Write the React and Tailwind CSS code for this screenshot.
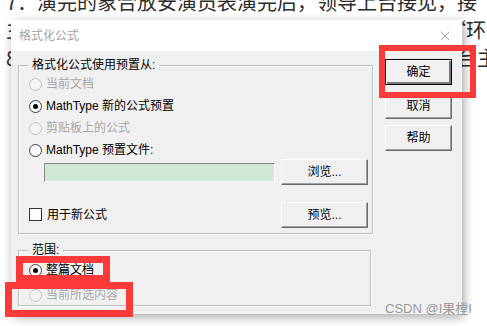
import { X } from "lucide-react";

const ui = { fontFamily: '"Liberation Sans", "Noto Sans CJK SC", sans-serif' };
const cjk = { fontFamily: '"Noto Sans CJK SC", sans-serif' };

export default function App() {
  return (
    <div className="relative h-[326px] w-[487px] overflow-hidden bg-white">
      {/* article text behind the dialog */}
      <div className="mt-[-12px] whitespace-nowrap pl-[6px] text-[20px] leading-[28px] text-[#2b2b2b]" style={cjk}>
        <p>7：演完的象合放安演员表演完后，领导上台接见，接</p>
        <p>主任宣读：给一位演员颁发奖状，这个奖状叫做道“环</p>
        <p>8、演出结束后，演员们集体合影留念，然后谢幕下台主</p>
        <p>《一起去参加庆功宴会，大家一起吃饭喝酒祝贺三</p>
      </div>

      <div className="absolute left-[11px] top-[20px] flex h-[294px] w-[451px] flex-col shadow-[2px_3px_10px_rgba(0,0,0,0.35)]" style={ui}>
        <div className="flex h-[31px] items-center justify-between bg-white pl-[8px] pr-[9px] text-[12px] text-[#a3a3a3]">
          <span>格式化公式</span>
          <X size={16} strokeWidth={1} className="text-[#777]" />
        </div>

        <div className="flex flex-1 bg-[#f0f0f0] pl-[7px] text-[12px] text-black">
          <div className="flex w-[355px] flex-col pt-[14px]">
            <Group label="格式化公式使用预置从:" className="h-[169px] w-[355px] pt-[7px]">
              <Radio label="当前文档" disabled />
              <Radio label="MathType 新的公式预置" checked />
              <Radio label="剪贴板上的公式" disabled />
              <Radio label="MathType 预置文件:" />
              <div className="mt-[-2px] flex h-[26px] items-center justify-between pl-[25px] pr-[4px]">
                <div className="h-[19px] w-[231px] border border-b-white border-l-[#8a8a8a] border-r-white border-t-[#8a8a8a] bg-[#cfe8d3]" />
                <Btn className="w-[87px]">浏览...</Btn>
              </div>
              <div className="mt-[17px] flex h-[25px] items-center pl-[10px] pr-[4px]">
                <span className="h-[13px] w-[13px] border border-[#333] bg-white" />
                <span className="ml-[5px]">用于新公式</span>
                <Btn className="ml-auto w-[87px]">预览...</Btn>
              </div>
            </Group>

            <Group label="范围:" className="mt-[16px] h-[56px] w-[353px] pt-[8px]">
              <Radio label="整篇文档" checked />
              <div className="mt-[3px]">
                <Radio label="当前所选内容" disabled />
              </div>
            </Group>
          </div>

          <div className="ml-[12px] flex flex-col pt-[8px]">
            <Btn def className="w-[67px]">确定</Btn>
            <Btn className="mt-[8px] w-[67px]">取消</Btn>
            <Btn className="mt-[6px] w-[67px]">帮助</Btn>
          </div>
        </div>
      </div>

      {/* red annotation boxes */}
      <div className="absolute left-[5px] top-[282px] h-[35px] w-[128px] border-[7px] border-[#fc3a3a]" />
      <div className="absolute left-[16px] top-[256px] h-[26px] w-[94px] border-[7px] border-[#fc3a3a]" />
      <div className="absolute left-[379px] top-[45px] h-[53px] w-[97px] border-[6px] border-[#fc3a3a]" />

      <div className="absolute left-[385px] top-[301px] text-[13px] leading-[16px] text-[#8f8f8f]/90" style={ui}>
        CSDN @I果樘I
      </div>
    </div>
  );
}

function Group({ label, className, children }) {
  return (
    <div className={`relative border border-[#bdbdbd] shadow-[1px_1px_0_#fff,inset_1px_1px_0_#fff] ${className}`}>
      <span className="absolute left-[9px] top-[-9px] bg-[#f0f0f0] px-[4px] leading-[16px]">{label}</span>
      {children}
    </div>
  );
}

function Radio({ label, checked, disabled }) {
  return (
    <div className="flex h-[22px] items-center pl-[10px]">
      <span
        className={`flex h-[13px] w-[13px] items-center justify-center rounded-full border ${
          disabled ? "border-[#c4c4c4] bg-[#f4f4f4]" : "border-[#3c3c3c] bg-white"
        }`}
      >
        {checked && <span className="h-[5px] w-[5px] rounded-full bg-black" />}
      </span>
      <span className={`ml-[4px] ${disabled ? "text-[#a8a8a8]" : "text-black"}`}>{label}</span>
    </div>
  );
}

function Btn({ def, className, children }) {
  return (
    <div
      className={`flex h-[26px] items-center justify-center bg-[#f0f0f0] text-[12px] ${
        def
          ? "border border-black shadow-[inset_1px_1px_0_#fff,inset_-2px_-2px_0_#7a7a7a]"
          : "border border-b-[#6a6a6a] border-l-white border-r-[#6a6a6a] border-t-white shadow-[inset_-1px_-1px_0_#a0a0a0]"
      } ${className}`}
    >
      {children}
    </div>
  );
}
